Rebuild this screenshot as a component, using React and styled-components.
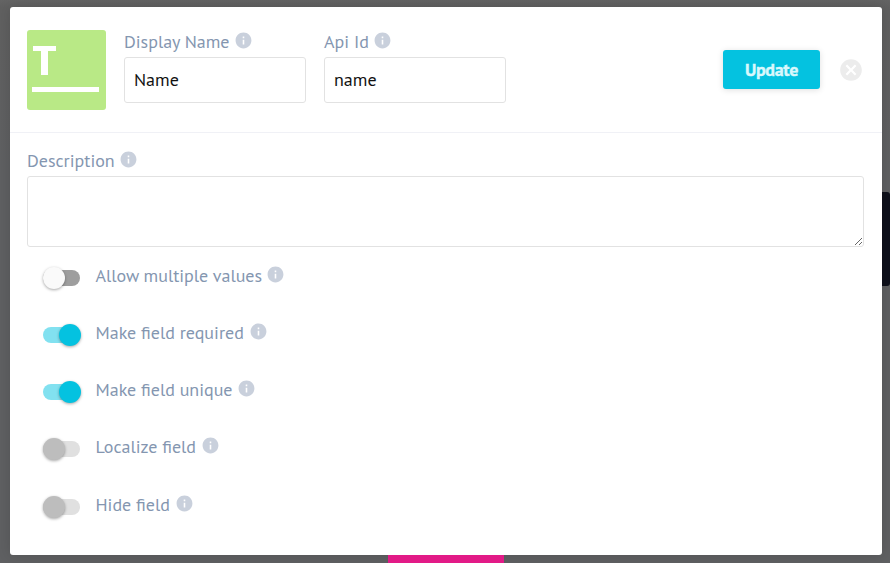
import React from "react";
import styled, { createGlobalStyle } from "styled-components";

const GlobalStyle = createGlobalStyle`
  * { box-sizing: border-box; }
  body { margin: 0; overflow: hidden; background: #5f6062; font-family: "PT Sans", "Noto Sans", sans-serif; }
`;

const Backdrop = styled.div`
  position: relative;
  width: 890px;
  height: 563px;
  padding: 7px 8px 8px 10px;
  background: linear-gradient(#646464 0, #606060 7px, #5f6062 180px);
`;

const SidePeek = styled.div`
  position: absolute;
  right: 0;
  top: 192px;
  width: 12px;
  height: 94px;
  border-radius: 3px;
  background: #0e101b;
`;

const BottomPeek = styled.div`
  position: absolute;
  left: 388px;
  bottom: 0;
  z-index: 1;
  width: 116px;
  height: 8px;
  background: #e21a87;
`;

const Dialog = styled.section`
  position: relative;
  width: 872px;
  height: 548px;
  border-radius: 3px;
  background: #fff;
  box-shadow: 0 0 14px rgba(0, 0, 0, 0.14);
`;

const Header = styled.header`
  display: flex;
  align-items: flex-start;
  height: 126px;
  padding: 23px 18px 0 17px;
  border-bottom: 1px solid #f0f1f6;
`;

const FieldIcon = styled.svg`
  display: block;
  flex: none;
  width: 79px;
  height: 80px;
  margin-right: 18px;
`;

const Field = styled.div`
  width: 182px;
  margin-right: 18px;
`;

const LabelLine = styled.div`
  display: flex;
  align-items: center;
  height: 24px;
  color: #8496b0;
  font-size: 18px;
  line-height: 24px;
  white-space: nowrap;
`;

const LabelText = styled.span`
  width: ${(p) => p.$width}px;
  margin-right: 3.5px;
`;

const InfoSvg = styled.svg`
  flex: none;
  width: 19px;
  height: 19px;
  margin-top: -3px;
  fill: #c9d0dc;
`;

const Input = styled.input`
  display: block;
  width: 182px;
  height: 46px;
  margin-top: 3px;
  padding: 0 9px 2px;
  border: 1px solid #e2e2e2;
  border-radius: 3px;
  outline: 0;
  background: #fff;
  color: #111;
  font: 18px "PT Sans", "Noto Sans", sans-serif;
`;

const UpdateButton = styled.button`
  width: 97px;
  height: 39px;
  margin: 20px 18px 0 auto;
  padding: 0;
  border: 0;
  border-radius: 3px;
  background: #04c2e0;
  color: #d9f8fc;
  box-shadow: 0 1px 6px rgba(0, 0, 0, 0.13);
  font: 700 18px/39px "PT Sans", "Noto Sans", sans-serif;
  letter-spacing: -0.3px;
  -webkit-text-stroke: 0.4px #d9f8fc;
`;

const CloseButton = styled.button`
  width: 26px;
  height: 26px;
  margin-top: 26.5px;
  padding: 0;
  border: 0;
  background: none;

  svg { display: block; width: 26px; height: 26px; fill: #ececec; }
`;

const Body = styled.div`
  padding: 16px 18px 0 17px;
`;

const TextArea = styled.textarea`
  display: block;
  width: 837px;
  height: 71px;
  margin-top: 3px;
  border: 1px solid #e2e2e2;
  border-radius: 3px;
  outline: 0;
  background: #fff;
`;

const OptionList = styled.div`
  display: grid;
  grid-auto-rows: 57.125px;
  padding: 17px 0 0 16px;
`;

const Option = styled.div`
  display: flex;
  align-items: flex-start;
`;

const palette = {
  off: ["#9e9e9e", "#fafafa"],
  on: ["#82e1f0", "#04c2e0"],
  disabled: ["#e0e0e0", "#bdbdbd"],
};

const Switch = styled.span`
  display: flex;
  align-items: center;
  justify-content: ${(p) => (p.$state === "on" ? "flex-end" : "flex-start")};
  width: 37px;
  height: 16px;
  margin: 6px 15.5px 0 0;
  border-radius: 8px;
  background: ${(p) => palette[p.$state][0]};

  &::after {
    content: "";
    flex: none;
    width: 22px;
    height: 22px;
    margin-right: ${(p) => (p.$state === "on" ? "-0.5px" : "0")};
    border-radius: 50%;
    background: ${(p) => palette[p.$state][1]};
    box-shadow: 0 1px 3px rgba(0, 0, 0, 0.35);
  }
`;

const Info = () => (
  <InfoSvg viewBox="0 0 24 24">
    <path d="M12 2C6.48 2 2 6.48 2 12s4.48 10 10 10 10-4.48 10-10S17.52 2 12 2zm1 15h-2v-6h2v6zm0-8h-2V7h2v2z" />
  </InfoSvg>
);

const Label = ({ text, width }) => (
  <LabelLine>
    <LabelText $width={width}>{text}</LabelText>
    <Info />
  </LabelLine>
);

const options = [
  { text: "Allow multiple values", width: 166.5, state: "off" },
  { text: "Make field required", width: 149.5, state: "on" },
  { text: "Make field unique", width: 137.5, state: "on" },
  { text: "Localize field", width: 101.5, state: "disabled" },
  { text: "Hide field", width: 75.5, state: "disabled" },
];

export default function App() {
  return (
    <Backdrop>
      <GlobalStyle />
      <SidePeek />
      <BottomPeek />
      <Dialog>
        <Header>
          <FieldIcon viewBox="0 0 79 80">
            <rect width="79" height="80" rx="3" fill="#b9e986" />
            <path d="M6 16h23v5h-8v24h-7V21H6zM5 57h67v5H5z" fill="#fff" />
          </FieldIcon>
          <Field>
            <Label text="Display Name" width={106} />
            <Input defaultValue="Name" />
          </Field>
          <Field>
            <Label text="Api Id" width={45.5} />
            <Input defaultValue="name" />
          </Field>
          <UpdateButton>Update</UpdateButton>
          <CloseButton aria-label="Close">
            <svg viewBox="0 0 24 24">
              <path d="M12 2C6.47 2 2 6.47 2 12s4.47 10 10 10 10-4.47 10-10S17.53 2 12 2zm5 13.59L15.59 17 12 13.41 8.41 17 7 15.59 10.59 12 7 8.41 8.41 7 12 10.59 15.59 7 17 8.41 13.41 12 17 15.59z" />
            </svg>
          </CloseButton>
        </Header>
        <Body>
          <Label text="Description" width={88.5} />
          <TextArea />
          <OptionList>
            {options.map((o) => (
              <Option key={o.text}>
                <Switch $state={o.state} />
                <Label text={o.text} width={o.width} />
              </Option>
            ))}
          </OptionList>
        </Body>
      </Dialog>
    </Backdrop>
  );
}
